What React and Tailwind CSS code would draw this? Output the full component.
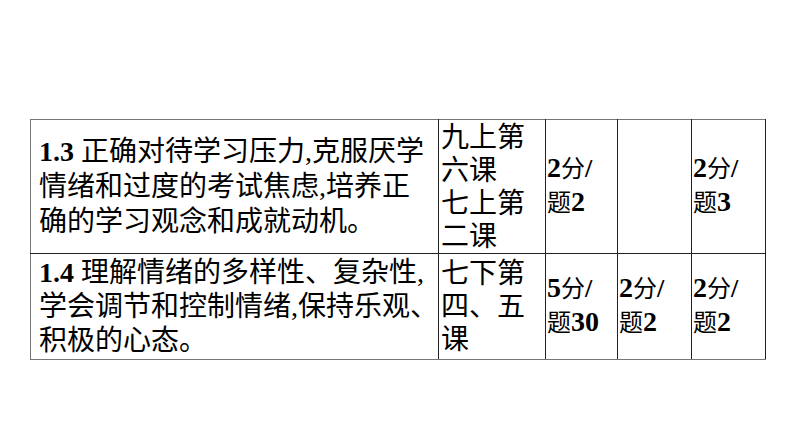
import React from 'react';

const serif = "font-['Liberation_Serif','Noto_Sans_CJK_SC',serif]";

function Score({ top, bottom, num }) {
  return (
    <div className="leading-[30px] whitespace-nowrap">
      <div>
        <span className="font-bold text-[28px]">{top}</span>
        <span className="text-[24px]">分</span>
        <span className="font-bold text-[26px]">/</span>
      </div>
      <div>
        <span className="text-[24px]">题</span>
        <span className="font-bold text-[28px]">{num}</span>
      </div>
    </div>
  );
}

export default function App() {
  const td = 'border border-[#222] align-middle p-0';
  return (
    <div className={`w-[794px] h-[446px] bg-white overflow-hidden ${serif} text-black`}>
      <table className="ml-[30px] mt-[119px] border-collapse table-fixed border border-[#666]" style={{ width: 735 }}>
        <colgroup>
          <col className="w-[408px]" />
          <col className="w-[107px]" />
          <col className="w-[72px]" />
          <col className="w-[74px]" />
          <col className="w-[74px]" />
        </colgroup>
        <tbody>
          <tr className="h-[134px]">
            <td className={`${td} pl-2 border-l-[#777] border-t-[#777]`}>
              <div className="text-[28px] leading-[35px] whitespace-nowrap">
                <span className="font-bold">1.3</span> 正确对待学习压力,克服厌学<br />
                情绪和过度的考试焦虑,培养正<br />
                确的学习观念和成就动机。
              </div>
            </td>
            <td className={`${td} pl-[2px] border-t-[#777]`}>
              <div className="text-[28px] leading-[33px]">
                九上第<br />六课<br />七上第<br />二课
              </div>
            </td>
            <td className={`${td} pl-[1px] border-t-[#777]`}>
              <Score top="2" num="2" />
            </td>
            <td className={`${td} border-t-[#777]`}></td>
            <td className={`${td} pl-[1px] border-t-[#777]`}>
              <Score top="2" num="3" />
            </td>
          </tr>
          <tr className="h-[106px]">
            <td className={`${td} pl-2 border-l-[#777] border-b-[#777]`}>
              <div className="text-[28px] leading-[34px] whitespace-nowrap">
                <span className="font-bold">1.4</span> 理解情绪的多样性、复杂性,<br />
                学会调节和控制情绪,保持乐观、<br />
                积极的心态。
              </div>
            </td>
            <td className={`${td} pl-[2px] border-b-[#777]`}>
              <div className="text-[28px] leading-[33px]">
                七下第<br />四、五<br />课
              </div>
            </td>
            <td className={`${td} pl-[1px] border-b-[#777]`}>
              <Score top="5" num="30" />
            </td>
            <td className={`${td} pl-[1px] border-b-[#777]`}>
              <Score top="2" num="2" />
            </td>
            <td className={`${td} pl-[1px] border-b-[#777]`}>
              <Score top="2" num="2" />
            </td>
          </tr>
        </tbody>
      </table>
    </div>
  );
}
